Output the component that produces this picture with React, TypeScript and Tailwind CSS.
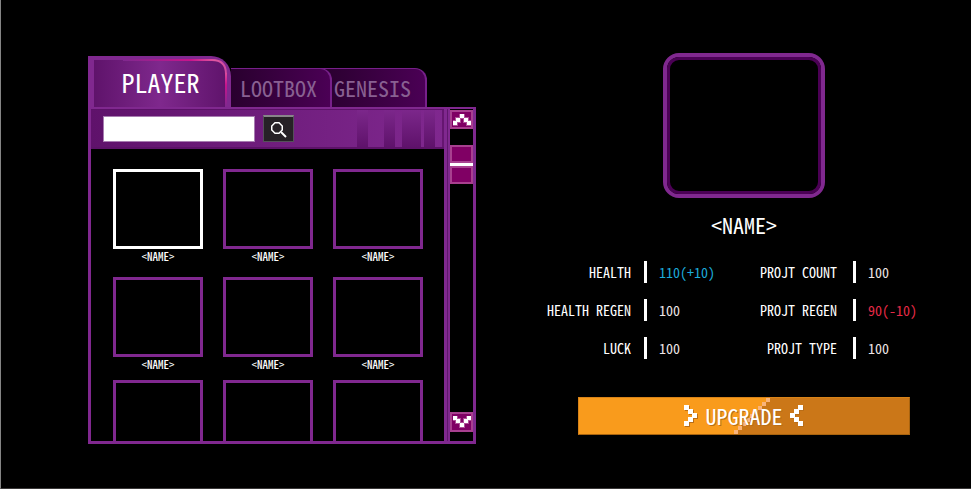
import React, { useState } from "react";

const FONT =
  "font-['Noto_Sans_CJK_JP','DejaVu_Sans_Mono',monospace] [font-feature-settings:'hwid'] font-normal";

type Point = [number, number];

const UP: Point[] = [[0, 7], [3, 4], [7, 0], [11, 4], [14, 7]];
const DOWN: Point[] = [[0, 0], [3, 3], [7, 7], [11, 3], [14, 0]];
const RIGHT: Point[] = [[0, 0], [4, 4], [8, 8], [4, 12], [0, 16]];
const LEFT: Point[] = [[8, 0], [4, 4], [0, 8], [4, 12], [8, 16]];

function ScrollArrow({ points }: { points: Point[] }) {
  return (
    <svg className="shrink-0" width="18" height="12" viewBox="0 0 18 12" shapeRendering="crispEdges" aria-hidden="true">
      {points.map(([x, y]) => (
        <rect key={`h${x}`} x={x - 1} y={y - 1} width="6" height="6" fill="#b04f97" />
      ))}
      {points.map(([x, y]) => (
        <rect key={`p${x}`} x={x} y={y} width="4" height="4" fill="#fff" />
      ))}
    </svg>
  );
}

function Chevron({ points }: { points: Point[] }) {
  return (
    <svg className="shrink-0" width="14" height="22" viewBox="0 0 14 22" shapeRendering="crispEdges" aria-hidden="true">
      {points.map(([x, y]) => (
        <rect key={`s${y}`} x={x + 1} y={y + 1} width="5" height="5" fill="#b96d17" />
      ))}
      {points.map(([x, y]) => (
        <rect key={`p${y}`} x={x} y={y} width="5" height="5" fill="#fff" />
      ))}
    </svg>
  );
}

function SearchIcon() {
  return (
    <svg width="17" height="17" viewBox="0 0 17 17" fill="none" stroke="#fff" aria-hidden="true">
      <path d="M5 1.75H9L12.25 5V9L9 12.25H5L1.75 9V5Z" strokeWidth="1.5" />
      <path d="M11 11L16 16" strokeWidth="2" />
    </svg>
  );
}

type CardProps = { selected?: boolean; label?: string };

function Card({ selected = false, label }: CardProps) {
  return (
    <button type="button" aria-label="Item" aria-pressed={selected} className="flex w-[90px] flex-col items-center">
      <span className={`block h-20 w-full border-3 ${selected ? "border-white" : "border-[#80288f]"}`} />
      {label && <span className="text-[11px] leading-[14px] font-medium text-white">{label}</span>}
    </button>
  );
}

type Stat = { label: string; value: string; tone: string };

const STATS_LEFT: Stat[] = [
  { label: "HEALTH", value: "110(+10)", tone: "text-[#1cabdc]" },
  { label: "HEALTH REGEN", value: "100", tone: "text-[#eee6e6]" },
  { label: "LUCK", value: "100", tone: "text-[#eee6e6]" },
];
const STATS_RIGHT: Stat[] = [
  { label: "PROJT COUNT", value: "100", tone: "text-[#eee6e6]" },
  { label: "PROJT REGEN", value: "90(-10)", tone: "text-[#e52a46]" },
  { label: "PROJT TYPE", value: "100", tone: "text-[#eee6e6]" },
];

function StatList({ stats, gap }: { stats: Stat[]; gap: string }) {
  return (
    <dl className="flex flex-col gap-4 text-sm leading-[22px]">
      {stats.map((s) => (
        <div key={s.label} className={`flex ${gap}`}>
          <dt className="w-[88px] text-right whitespace-nowrap text-white">{s.label}</dt>
          <dd className={`border-l-3 border-white pl-3 whitespace-nowrap ${s.tone}`}>{s.value}</dd>
        </div>
      ))}
    </dl>
  );
}

export default function App() {
  const [query, setQuery] = useState("");
  return (
    <main className={`flex min-h-screen items-start border-b border-l border-b-[#3a3838] border-l-[#858585] bg-black ${FONT}`}>
      <section className="ml-[87px] w-[388px] shrink-0 pt-14">
        <div role="tablist" className="flex items-end">
          <button
            type="button"
            role="tab"
            aria-selected="true"
            className="relative h-[51px] w-[143px] rounded-tr-[20px] border-3 border-r-4 border-b-0 border-[#80288f] bg-[#80288f] pt-px pl-[3px]"
          >
            <span className="flex h-full items-center justify-center rounded-tr-2xl bg-linear-to-r from-[#5f136b] via-[#7f288d] to-[#5f136b] pb-1 text-[26px] leading-8 text-white">
              PLAYER
            </span>
            <svg className="absolute top-0 right-0" width="104" height="48" viewBox="0 0 104 48" fill="none" aria-hidden="true">
              <defs>
                <linearGradient id="glow" x1="0" y1="0" x2="104" y2="0" gradientUnits="userSpaceOnUse">
                  <stop offset="0" stopColor="#80288f" />
                  <stop offset="0.65" stopColor="#c8148c" />
                  <stop offset="0.88" stopColor="#e0559f" />
                  <stop offset="1" stopColor="#d04aa0" />
                </linearGradient>
                <linearGradient id="fade" x1="0" y1="14" x2="0" y2="48" gradientUnits="userSpaceOnUse">
                  <stop offset="0" stopColor="#dc4a9d" />
                  <stop offset="0.35" stopColor="#c8148c" />
                  <stop offset="1" stopColor="#80288f" />
                </linearGradient>
              </defs>
              <path d="M0 1H89Q103 1 103 15" stroke="url(#glow)" strokeWidth="2" />
              <path d="M103 14V48" stroke="url(#fade)" strokeWidth="2" />
            </svg>
          </button>
          <button
            type="button"
            role="tab"
            aria-selected="false"
            className="relative z-10 h-[39px] w-[101px] rounded-tr-xl border-t border-r-2 border-[#77208a] bg-linear-to-r from-[#29002e] to-[#4b0055] pr-1 pb-[3px] text-[22px] leading-8 text-[#896092]"
          >
            LOOTBOX
          </button>
          <button
            type="button"
            role="tab"
            aria-selected="false"
            className="-ml-3 h-[39px] w-[107px] rounded-tr-xl border-t border-r-2 border-[#77208a] bg-linear-to-r from-[#29002e] to-[#4b0055] pb-[3px] text-[22px] leading-8 text-[#896092]"
          >
            GENESIS
          </button>
        </div>

        <div className="flex h-[337px] border-3 border-t-2 border-[#80288f]">
          <div className="flex min-w-0 flex-1 flex-col">
            <form
              className="flex h-10 shrink-0 items-center border-t border-b-2 border-[#5c1268] bg-linear-to-r from-[#5f126b] to-[#80288f] pl-3"
              onSubmit={(e) => e.preventDefault()}
            >
              <input
                type="search"
                aria-label="Search"
                value={query}
                onChange={(e) => setQuery(e.target.value)}
                className="h-[26px] w-[152px] border border-[#a77cb0] bg-white px-2 text-sm text-black outline-none"
              />
              <button
                type="submit"
                aria-label="Search"
                className="ml-2 flex h-[27px] w-[31px] items-center justify-center border border-t-2 border-[#55505a] border-t-[#88858a] bg-[#262126]"
              >
                <SearchIcon />
              </button>
              <div aria-hidden="true" className="ml-auto flex h-full pr-[7px]">
                <span className="mr-4 w-[11px] bg-linear-to-b from-[#7c278b] to-[#5f126b]" />
                <span className="mr-[7px] w-[11px] bg-linear-to-b from-[#7c278b] to-[#5f126b]" />
                <span className="mr-[3px] w-[19px] bg-linear-to-b from-[#7c278b] to-[#5f126b]" />
                <span className="w-[11px] bg-linear-to-b from-[#7c278b] to-[#5f126b]" />
              </div>
              <span aria-hidden="true" className="h-full w-0.5 bg-[#651670]" />
            </form>
            <div className="flex-1 overflow-hidden pt-5 pl-[22px]">
              <div className="mb-3.5 flex gap-5">
                <Card selected label="<NAME>" />
                <Card label="<NAME>" />
                <Card label="<NAME>" />
              </div>
              <div className="mb-[9px] flex gap-5">
                <Card label="<NAME>" />
                <Card label="<NAME>" />
                <Card label="<NAME>" />
              </div>
              <div className="flex gap-5">
                <Card />
                <Card />
                <Card />
              </div>
            </div>
          </div>
          <div className="flex w-[29px] shrink-0 border-l-3 border-[#80288f]">
            <span aria-hidden="true" className="w-[3px] border-r-2 border-l border-r-[#80288f] border-l-[#5f176c]" />
            <div className="flex flex-1 flex-col">
              <button
                type="button"
                aria-label="Scroll up"
                className="mt-px flex h-[19px] items-center justify-center border-2 border-[#a8408f] bg-[#800064]"
              >
                <ScrollArrow points={UP} />
              </button>
              <div className="mt-4 flex h-[39px] flex-col justify-between bg-white">
                <span className="h-[18px] border-2 border-[#a8408f] bg-[#800064]" />
                <span className="h-[18px] border-2 border-[#a8408f] bg-[#800064]" />
              </div>
              <button
                type="button"
                aria-label="Scroll down"
                className="mt-auto mb-[9px] flex h-5 items-center justify-center border-2 border-[#a8408f] bg-[#800064]"
              >
                <ScrollArrow points={DOWN} />
              </button>
            </div>
          </div>
        </div>
      </section>

      <section className="ml-[41px] flex flex-1 flex-col items-center pt-[53px]">
        <div className="h-[145px] w-[162px] rounded-2xl border-4 border-[#80288f]">
          <div className="h-full rounded-xl border-3 border-[#4b0055]" />
        </div>
        <h1 className="mt-2.5 text-[22px] leading-8 text-white">&lt;NAME&gt;</h1>
        <div className="mt-[21px] flex w-[402px]">
          <div className="w-[206px]">
            <StatList stats={STATS_LEFT} gap="gap-[13px]" />
          </div>
          <StatList stats={STATS_RIGHT} gap="gap-4" />
        </div>
        <button
          type="button"
          className="relative mt-[38px] h-[38px] w-[332px] border border-[#d98318] border-r-[#a8630f] border-b-[#a8630f] bg-[#cb7718] text-[22px] leading-8 text-white"
        >
          <svg className="absolute inset-0" width="330" height="36" viewBox="0 0 330 36" shapeRendering="crispEdges" aria-hidden="true">
            <path
              d="M0 0H187V4H183V8H179V12H175V16H171V20H167V24H163V28H159V32H155V36H0Z"
              fill="#f99b1c"
            />
            {[0, 1, 2, 3, 4, 5, 6, 7, 8].map((i) => (
              <rect key={i} x={187 - i * 4} y={i * 4} width="4" height="4" fill="#f9b47c" />
            ))}
          </svg>
          <span className="relative flex items-center justify-center gap-[7px]">
            <Chevron points={RIGHT} />
            <span className="w-[78px] pb-0.5 [text-shadow:1px_1px_0_#b96d17]">UPGRADE</span>
            <Chevron points={LEFT} />
          </span>
        </button>
      </section>
    </main>
  );
}
